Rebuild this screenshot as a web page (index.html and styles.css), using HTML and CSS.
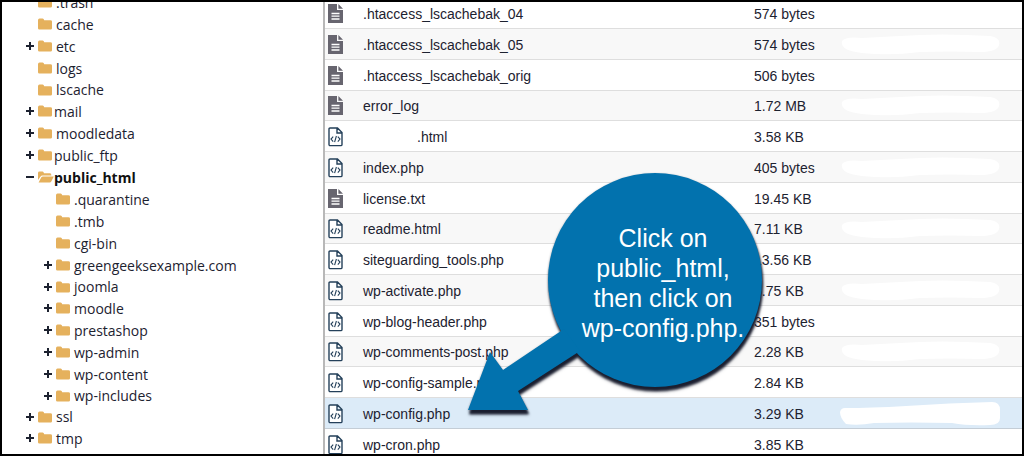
FILE: index.html
```html
<!DOCTYPE html>
<html lang="en">
<head>
    <meta charset="UTF-8">
    <meta name="viewport" content="width=device-width, initial-scale=1.0">
    <title>File Manager</title>
    <link rel="stylesheet" href="styles.css">
</head>
<body>
    <svg class="sprite" aria-hidden="true">
        <symbol id="folder" viewBox="0 0 14 12">
            <path d="M0 2.2Q0 .6 1.5.6H4.6Q5.8.6 6.2 2.2H12.4Q14 2.2 14 3.6V10.2Q14 11.6 12.6 11.6H1.4Q0 11.6 0 10.2Z" fill="#e5b15d"/>
        </symbol>
        <symbol id="folder-open" viewBox="0 0 16 12">
            <path d="M0 9V2Q0 .6 1.5.6H4.6Q5.6.6 6 2.2H12Q13.4 2.2 13.4 4.6H4.4Q3.2 4.6 2.4 5.8Z" fill="#e5b15d"/>
            <path d="M.6 11.4 3.2 6.6Q3.8 5.4 5 5.4H15.8L13.4 10.2Q12.8 11.4 11.6 11.4Z" fill="#e5b15d"/>
        </symbol>
        <symbol id="text-file" viewBox="0 0 15 20">
            <path d="M0 0H9V6H15V19H0Z" fill="#67656f"/>
            <path d="M10.4 0 15 4.8H10.4Z" fill="#67656f"/>
            <path d="M3.5 9.5H11.5M3.5 12.2H11.5M3.5 15H11.5" stroke="#fff" stroke-width="1.3"/>
        </symbol>
        <symbol id="code-file" viewBox="0 0 15 20">
            <path d="M2 1H9.5L14 5.5V17.4Q14 18.6 12.8 18.6H2.2Q1 18.6 1 17.4V2Q1 1 2 1ZM9 1V6H14" fill="#fff" stroke="#24405a" stroke-width="1.4"/>
            <path d="M5.2 9.6 3 12.1 5.2 14.6M9.8 9.6 12 12.1 9.8 14.6M8.4 9 6.6 15.2" fill="none" stroke="#24405a" stroke-width="1.1"/>
        </symbol>
        <symbol id="smudge" viewBox="0 0 160 24">
            <path d="M2 8Q6 3 22 5L60 3Q100 0 150 3Q161 5 159 12Q157 19 140 19Q110 18 80 19Q50 23 22 20Q0 18 2 8Z" fill="#fff"/>
        </symbol>
        <symbol id="smudge-solid" viewBox="0 0 160 24">
            <path d="M5 6Q30 6 66 4Q110 1 152 0Q160 0 160 8V16Q160 23 150 23Q128 24 112 21Q70 20 34 21Q18 24 6 22Q0 16 0 10Q1 6 5 6Z" fill="#fff"/>
        </symbol>
    </svg>

    <div class="file-manager">
        <nav class="sidebar" aria-label="Folders">
            <ul class="tree">
                <li><div class="node"><span class="toggle"></span><svg class="folder"><use href="#folder"/></svg><a href="#">.trash</a></div></li>
                <li><div class="node"><span class="toggle"></span><svg class="folder"><use href="#folder"/></svg><a href="#">cache</a></div></li>
                <li><div class="node"><button class="toggle expand" aria-label="Expand etc"></button><svg class="folder"><use href="#folder"/></svg><a href="#">etc</a></div></li>
                <li><div class="node"><span class="toggle"></span><svg class="folder"><use href="#folder"/></svg><a href="#">logs</a></div></li>
                <li><div class="node"><span class="toggle"></span><svg class="folder"><use href="#folder"/></svg><a href="#">lscache</a></div></li>
                <li><div class="node special"><button class="toggle expand" aria-label="Expand mail"></button><svg class="folder"><use href="#folder"/></svg><a href="#">mail</a></div></li>
                <li><div class="node"><button class="toggle expand" aria-label="Expand moodledata"></button><svg class="folder"><use href="#folder"/></svg><a href="#">moodledata</a></div></li>
                <li><div class="node special"><button class="toggle expand" aria-label="Expand public_ftp"></button><svg class="folder"><use href="#folder"/></svg><a href="#">public_ftp</a></div></li>
                <li>
                    <div class="node special current"><button class="toggle" aria-label="Collapse public_html"></button><svg class="folder open"><use href="#folder-open"/></svg><a href="#">public_html</a></div>
                    <ul>
                        <li><div class="node"><span class="toggle"></span><svg class="folder"><use href="#folder"/></svg><a href="#">.quarantine</a></div></li>
                        <li><div class="node"><span class="toggle"></span><svg class="folder"><use href="#folder"/></svg><a href="#">.tmb</a></div></li>
                        <li><div class="node"><span class="toggle"></span><svg class="folder"><use href="#folder"/></svg><a href="#">cgi-bin</a></div></li>
                        <li><div class="node"><button class="toggle expand" aria-label="Expand greengeeksexample.com"></button><svg class="folder"><use href="#folder"/></svg><a href="#">greengeeksexample.com</a></div></li>
                        <li><div class="node"><button class="toggle expand" aria-label="Expand joomla"></button><svg class="folder"><use href="#folder"/></svg><a href="#">joomla</a></div></li>
                        <li><div class="node"><button class="toggle expand" aria-label="Expand moodle"></button><svg class="folder"><use href="#folder"/></svg><a href="#">moodle</a></div></li>
                        <li><div class="node"><button class="toggle expand" aria-label="Expand prestashop"></button><svg class="folder"><use href="#folder"/></svg><a href="#">prestashop</a></div></li>
                        <li><div class="node"><button class="toggle expand" aria-label="Expand wp-admin"></button><svg class="folder"><use href="#folder"/></svg><a href="#">wp-admin</a></div></li>
                        <li><div class="node"><button class="toggle expand" aria-label="Expand wp-content"></button><svg class="folder"><use href="#folder"/></svg><a href="#">wp-content</a></div></li>
                        <li><div class="node"><button class="toggle expand" aria-label="Expand wp-includes"></button><svg class="folder"><use href="#folder"/></svg><a href="#">wp-includes</a></div></li>
                    </ul>
                </li>
                <li><div class="node"><button class="toggle expand" aria-label="Expand ssl"></button><svg class="folder"><use href="#folder"/></svg><a href="#">ssl</a></div></li>
                <li><div class="node"><button class="toggle expand" aria-label="Expand tmp"></button><svg class="folder"><use href="#folder"/></svg><a href="#">tmp</a></div></li>
            </ul>
        </nav>

        <main class="files">
            <table class="file-table">
                <colgroup>
                    <col class="col-icon">
                    <col>
                    <col class="col-size">
                    <col class="col-date">
                </colgroup>
                <tbody>
                    <tr><td><svg class="file-icon"><use href="#text-file"/></svg></td><td>.htaccess_lscachebak_04</td><td>574 bytes</td><td></td></tr>
                    <tr><td><svg class="file-icon"><use href="#text-file"/></svg></td><td>.htaccess_lscachebak_05</td><td>574 bytes</td><td><svg class="smudge"><use href="#smudge"/></svg></td></tr>
                    <tr><td><svg class="file-icon"><use href="#text-file"/></svg></td><td>.htaccess_lscachebak_orig</td><td>506 bytes</td><td></td></tr>
                    <tr><td><svg class="file-icon"><use href="#text-file"/></svg></td><td>error_log</td><td>1.72 MB</td><td><svg class="smudge"><use href="#smudge"/></svg></td></tr>
                    <tr><td><svg class="file-icon"><use href="#code-file"/></svg></td><td><span class="erased"></span>.html</td><td>3.58 KB</td><td></td></tr>
                    <tr><td><svg class="file-icon"><use href="#code-file"/></svg></td><td>index.php</td><td>405 bytes</td><td><svg class="smudge"><use href="#smudge"/></svg></td></tr>
                    <tr><td><svg class="file-icon"><use href="#text-file"/></svg></td><td>license.txt</td><td>19.45 KB</td><td></td></tr>
                    <tr><td><svg class="file-icon"><use href="#code-file"/></svg></td><td>readme.html</td><td>7.11 KB</td><td><svg class="smudge"><use href="#smudge"/></svg></td></tr>
                    <tr><td><svg class="file-icon"><use href="#code-file"/></svg></td><td>siteguarding_tools.php</td><td>13.56 KB</td><td></td></tr>
                    <tr><td><svg class="file-icon"><use href="#code-file"/></svg></td><td>wp-activate.php</td><td>6.75 KB</td><td><svg class="smudge"><use href="#smudge"/></svg></td></tr>
                    <tr><td><svg class="file-icon"><use href="#code-file"/></svg></td><td>wp-blog-header.php</td><td>351 bytes</td><td></td></tr>
                    <tr><td><svg class="file-icon"><use href="#code-file"/></svg></td><td>wp-comments-post.php</td><td>2.28 KB</td><td><svg class="smudge"><use href="#smudge"/></svg></td></tr>
                    <tr><td><svg class="file-icon"><use href="#code-file"/></svg></td><td>wp-config-sample.php</td><td>2.84 KB</td><td></td></tr>
                    <tr class="selected"><td><svg class="file-icon"><use href="#code-file"/></svg></td><td>wp-config.php</td><td>3.29 KB</td><td><svg class="smudge"><use href="#smudge-solid"/></svg></td></tr>
                    <tr><td><svg class="file-icon"><use href="#code-file"/></svg></td><td>wp-cron.php</td><td>3.85 KB</td><td></td></tr>
                </tbody>
            </table>
        </main>

        <div class="callout">
            <svg class="callout-shape" viewBox="0 0 296 240" aria-hidden="true">
                <circle cx="187" cy="108" r="107"/>
                <path d="M0 238 22 180 35 198 96 157 112 179 50 219 60 238Z"/>
            </svg>
            <p class="callout-text">Click on<br>public_html,<br>then click on<br>wp-config.php.</p>
        </div>
    </div>
</body>
</html>
```

FILE: styles.css
```css
* {
    margin: 0;
    padding: 0;
    box-sizing: border-box;
}

body {
    background: #fff;
    color: #1d2230;
    font-family: 'Liberation Sans', Arial, sans-serif;
    font-size: 14px;
}

.sprite {
    display: none;
}

.file-manager {
    position: relative;
    display: flex;
    height: 100vh;
    border: 2px solid #000;
    overflow: hidden;
}

/* Folder tree */
.sidebar {
    flex: 0 0 321px;
    padding-left: 24px;
    font-family: 'Open Sans', sans-serif;
}

.tree {
    margin-top: -11px;
}

.tree,
.tree ul {
    list-style: none;
}

.tree ul {
    padding-left: 18px;
}

.node {
    display: flex;
    align-items: center;
    gap: 4px;
    height: 22px;
}

.tree li:nth-child(5n) > .node {
    height: 21px;
}

.node.special {
    gap: 2px;
}

.node.special .toggle {
    margin-right: 2px;
}

.node a {
    color: inherit;
    text-decoration: none;
}

.node.current {
    color: #111;
    font-weight: 700;
}

.toggle {
    flex: none;
    width: 8px;
    height: 10px;
    border: none;
    background: none;
}

button.toggle {
    background: linear-gradient(#1d2230, #1d2230) center / 8px 2px no-repeat;
    cursor: pointer;
}

button.expand {
    background:
        linear-gradient(#1d2230, #1d2230) center / 8px 2px no-repeat,
        linear-gradient(#1d2230, #1d2230) center / 2px 8px no-repeat;
}

.folder {
    flex: none;
    width: 14px;
    height: 12px;
}

.folder.open {
    width: 16px;
    margin-right: -2px;
}

/* File list */
.files {
    flex: 1;
    border-left: 2px solid #b8b8b8;
}

.file-table {
    width: 100%;
    margin-top: -4px;
    table-layout: fixed;
    border-collapse: separate;
    border-spacing: 0;
}

.col-icon {
    width: 38px;
}

.col-size {
    width: 86px;
}

.col-date {
    width: 182px;
}

.file-table td {
    height: 31px;
    padding-top: 1px;
    border-bottom: 1px solid #dedede;
    white-space: nowrap;
    vertical-align: middle;
}

.file-table td:first-child {
    padding-left: 3px;
}

.file-table tr:nth-child(4n) td {
    height: 30px;
}

.file-table tr:nth-child(even) td {
    background: #f8f8f8;
}

.file-table tr.selected td {
    background: #dcebf8;
    border-bottom-color: #c4cdd6;
}

.file-icon {
    display: block;
    width: 15px;
    height: 20px;
}

.erased {
    display: inline-block;
    width: 54px;
}

.smudge {
    display: block;
    width: 160px;
    height: 24px;
}

/* Callout over the list */
.callout {
    position: absolute;
    top: 170px;
    left: 466px;
    width: 296px;
    height: 240px;
}

.callout-shape {
    display: block;
    width: 100%;
    height: 100%;
    overflow: visible;
    fill: #0272ae;
    filter: drop-shadow(1px 4px 1px #1b1f30) drop-shadow(0 1px 1px rgba(27, 31, 48, 0.5));
}

.callout-text {
    position: absolute;
    top: 51px;
    right: 0;
    width: 202px;
    color: #fff;
    font-size: 25px;
    line-height: 30px;
    text-align: center;
}
```
